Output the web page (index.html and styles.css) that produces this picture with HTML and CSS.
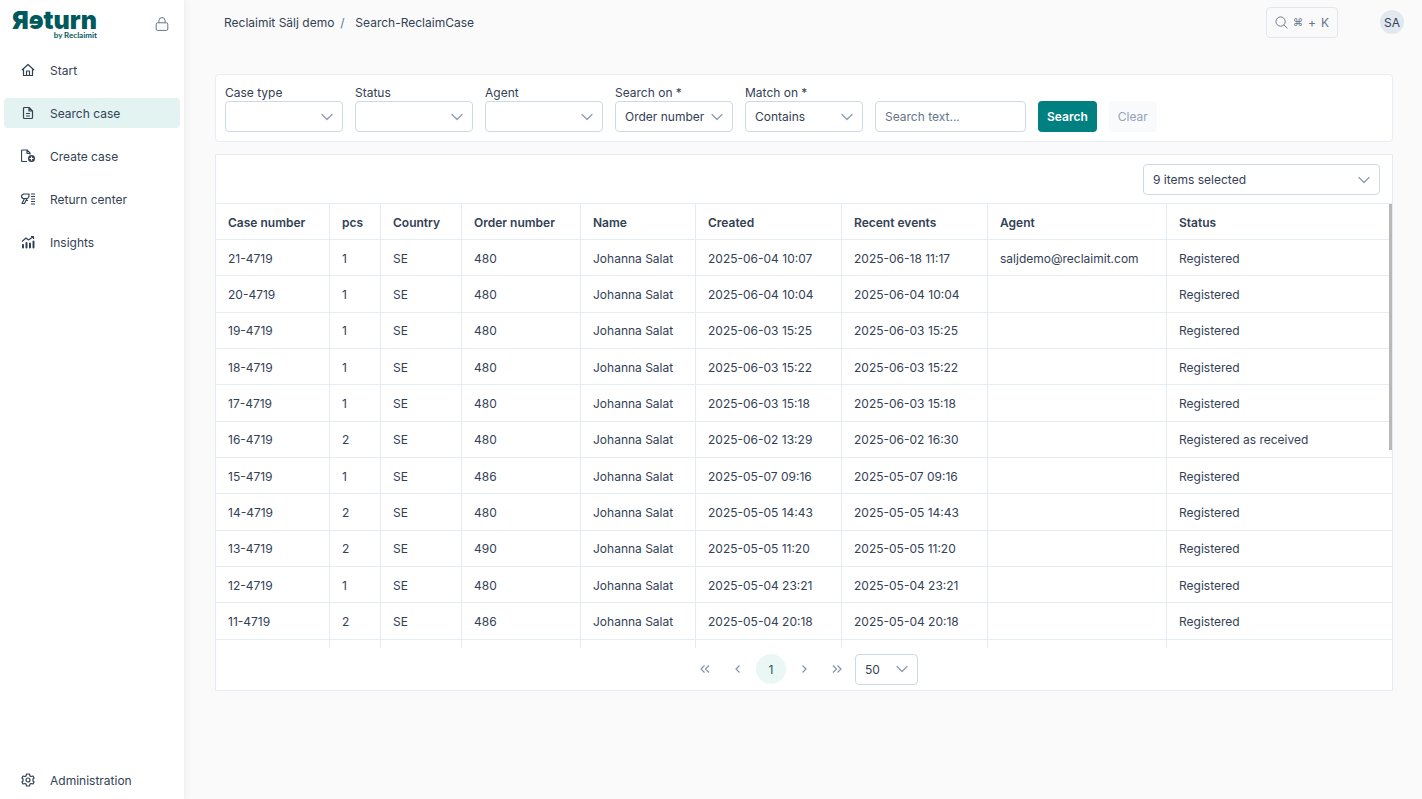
FILE: index.html
```html
<!DOCTYPE html>
<html lang="en">
<head>
  <meta charset="UTF-8">
  <meta name="viewport" content="width=device-width, initial-scale=1.0">
  <title>Search case - Return by Reclaimit</title>
  <link rel="stylesheet" href="styles.css">
</head>
<body>
  <aside class="sidebar">
    <div class="sidebar-top">
      <a href="#" class="logo">
        <span class="logo-name">Яɘturn</span>
        <span class="logo-sub">by Reclaimit</span>
      </a>
      <button type="button" class="lock-button" aria-label="Lock menu">
        <svg class="lock-icon" viewBox="0 0 14 14"><rect x="1.2" y="5.8" width="11.6" height="7.6" rx="1.4"/><path d="M3.9 5.8V3.7a3.1 3.1 0 0 1 6.2 0v2.1"/></svg>
      </button>
    </div>
    <nav class="menu">
      <a href="#" class="menu-item">
        <svg class="icon" viewBox="0 0 28 28"><path d="M2 14 14 3l12 11M5 11v14h18V11M11 25v-9h6v9"/></svg>
        Start
      </a>
      <a href="#" class="menu-item active">
        <svg class="icon" viewBox="0 0 28 28"><path d="M7 3h9l7 7v13a2 2 0 0 1-2 2H7a2 2 0 0 1-2-2V5a2 2 0 0 1 2-2zM16 3v7h6M10 15h8M10 20h8"/></svg>
        Search case
      </a>
      <a href="#" class="menu-item">
        <svg class="icon" viewBox="0 0 28 28"><path d="M12 25H3a2 2 0 0 1-2-2V4a2 2 0 0 1 2-2h9l6 6v3M12 3v6h6"/><circle class="solid" cx="21" cy="19" r="7"/><path class="light" d="M21 15v8M17 19h8"/></svg>
        Create case
      </a>
      <a href="#" class="menu-item">
        <svg class="icon" viewBox="0 0 28 28"><path d="M5 4h11v5l-3 4H4l-3-3V7zM12 13 7 23H2l5-10M11 17h3"/><path d="M20 4h8M20 9h8M20 14h8M20 19h8M20 24h8"/></svg>
        Return center
      </a>
      <a href="#" class="menu-item">
        <svg class="icon" viewBox="0 0 28 28"><path d="m2 13 8-7 5 4 10-7M20 3h5v5"/><path class="bars" d="M4 25v-5M11 25v-9M18 25v-8M25 25V13"/></svg>
        Insights
      </a>
    </nav>
    <a href="#" class="menu-item menu-bottom">
      <svg class="icon" viewBox="0 0 28 28"><path d="M11 2h6l1 4 2 1 4-1 2 4-2 2v4l2 2-2 4-4-1-2 1-1 4h-6l-1-4-2-1-4 1-2-4 2-2v-4l-2-2 2-4 4 1 2-1z"/><circle cx="14" cy="14" r="4"/></svg>
      Administration
    </a>
  </aside>

  <div class="page">
    <header class="topbar">
      <nav class="breadcrumb">
        <a href="#">Reclaimit Sälj demo</a>
        <span class="separator">/</span>
        <a href="#">Search-ReclaimCase</a>
      </nav>
      <button type="button" class="quick-search" aria-label="Quick search">
        <svg class="search-icon" viewBox="0 0 14 14"><circle cx="6" cy="6" r="5"/><path d="m9.6 9.6 3.8 3.8"/></svg>
        <span class="key-symbol">⌘</span>
        <span>+</span>
        <span>K</span>
      </button>
      <button type="button" class="avatar">SA</button>
    </header>

    <main class="content">
      <form class="card filters">
        <div class="field">
          <label for="caseType">Case type</label>
          <select id="caseType"><option></option></select>
        </div>
        <div class="field">
          <label for="status">Status</label>
          <select id="status"><option></option></select>
        </div>
        <div class="field">
          <label for="agent">Agent</label>
          <select id="agent"><option></option></select>
        </div>
        <div class="field">
          <label for="searchOn">Search on *</label>
          <select id="searchOn"><option>Order number</option></select>
        </div>
        <div class="field">
          <label for="matchOn">Match on *</label>
          <select id="matchOn"><option>Contains</option></select>
        </div>
        <input type="text" class="search-text" placeholder="Search text..." aria-label="Search text">
        <button type="button" class="btn btn-primary">Search</button>
        <button type="button" class="btn btn-clear">Clear</button>
      </form>

      <section class="results">
        <div class="results-top">
          <select class="column-select" aria-label="Columns"><option>9 items selected</option></select>
        </div>
        <div class="table-wrap">
          <table>
            <colgroup>
              <col class="col-case"><col class="col-pcs"><col class="col-country"><col class="col-order"><col class="col-name"><col class="col-date"><col class="col-date"><col class="col-agent"><col>
            </colgroup>
            <thead>
              <tr><th>Case number</th><th>pcs</th><th>Country</th><th>Order number</th><th>Name</th><th>Created</th><th>Recent events</th><th>Agent</th><th>Status</th></tr>
            </thead>
            <tbody>
              <tr><td>21-4719</td><td>1</td><td>SE</td><td>480</td><td>Johanna Salat</td><td>2025-06-04 10:07</td><td>2025-06-18 11:17</td><td>saljdemo@reclaimit.com</td><td>Registered</td></tr>
              <tr><td>20-4719</td><td>1</td><td>SE</td><td>480</td><td>Johanna Salat</td><td>2025-06-04 10:04</td><td>2025-06-04 10:04</td><td></td><td>Registered</td></tr>
              <tr><td>19-4719</td><td>1</td><td>SE</td><td>480</td><td>Johanna Salat</td><td>2025-06-03 15:25</td><td>2025-06-03 15:25</td><td></td><td>Registered</td></tr>
              <tr><td>18-4719</td><td>1</td><td>SE</td><td>480</td><td>Johanna Salat</td><td>2025-06-03 15:22</td><td>2025-06-03 15:22</td><td></td><td>Registered</td></tr>
              <tr><td>17-4719</td><td>1</td><td>SE</td><td>480</td><td>Johanna Salat</td><td>2025-06-03 15:18</td><td>2025-06-03 15:18</td><td></td><td>Registered</td></tr>
              <tr><td>16-4719</td><td>2</td><td>SE</td><td>480</td><td>Johanna Salat</td><td>2025-06-02 13:29</td><td>2025-06-02 16:30</td><td></td><td>Registered as received</td></tr>
              <tr><td>15-4719</td><td>1</td><td>SE</td><td>486</td><td>Johanna Salat</td><td>2025-05-07 09:16</td><td>2025-05-07 09:16</td><td></td><td>Registered</td></tr>
              <tr><td>14-4719</td><td>2</td><td>SE</td><td>480</td><td>Johanna Salat</td><td>2025-05-05 14:43</td><td>2025-05-05 14:43</td><td></td><td>Registered</td></tr>
              <tr><td>13-4719</td><td>2</td><td>SE</td><td>490</td><td>Johanna Salat</td><td>2025-05-05 11:20</td><td>2025-05-05 11:20</td><td></td><td>Registered</td></tr>
              <tr><td>12-4719</td><td>1</td><td>SE</td><td>480</td><td>Johanna Salat</td><td>2025-05-04 23:21</td><td>2025-05-04 23:21</td><td></td><td>Registered</td></tr>
              <tr><td>11-4719</td><td>2</td><td>SE</td><td>486</td><td>Johanna Salat</td><td>2025-05-04 20:18</td><td>2025-05-04 20:18</td><td></td><td>Registered</td></tr>
              <tr><td></td><td></td><td></td><td></td><td></td><td></td><td></td><td></td><td></td></tr>
            </tbody>
          </table>
          <div class="scroll-thumb"></div>
        </div>
        <div class="paginator">
          <button type="button" class="page-button" aria-label="First page"><svg viewBox="0 0 24 24"><path d="m11 5-7 7 7 7M20 5l-7 7 7 7"/></svg></button>
          <button type="button" class="page-button" aria-label="Previous page"><svg viewBox="0 0 24 24"><path d="m15 5-7 7 7 7"/></svg></button>
          <button type="button" class="page-button current">1</button>
          <button type="button" class="page-button" aria-label="Next page"><svg viewBox="0 0 24 24"><path d="m9 5 7 7-7 7"/></svg></button>
          <button type="button" class="page-button" aria-label="Last page"><svg viewBox="0 0 24 24"><path d="m4 5 7 7-7 7M13 5l7 7-7 7"/></svg></button>
          <select class="page-size" aria-label="Rows per page"><option>50</option></select>
        </div>
      </section>
    </main>
  </div>
</body>
</html>
```

FILE: styles.css
```css
* {
  box-sizing: border-box;
}

body {
  margin: 0;
  min-height: 100vh;
  display: flex;
  background-color: #fafafa;
  color: #334155;
  font-family: Inter, sans-serif;
  font-size: 12px;
  line-height: 17px;
}

a {
  color: inherit;
  text-decoration: none;
}

button,
input,
select {
  font: inherit;
  color: inherit;
}

button {
  cursor: pointer;
}

svg {
  fill: none;
  stroke: currentColor;
}

/* Sidebar */
.sidebar {
  display: flex;
  flex-direction: column;
  flex: none;
  width: 185px;
  padding: 0 4px 4px;
  background-color: #fff;
  border-right: 1px solid #f1f1f1;
  box-shadow: 0 0 8px rgba(0, 0, 0, 0.06);
}

.sidebar-top {
  display: flex;
  justify-content: space-between;
  align-items: center;
  height: 48px;
  padding: 0 11px 0 8px;
}

.logo {
  display: flex;
  flex-direction: column;
  color: #00595c;
}

.logo-name {
  font-size: 25px;
  font-weight: 900;
  line-height: 22px;
}

.logo-sub {
  font-family: Lato, sans-serif;
  font-size: 8px;
  font-weight: 700;
  line-height: 8px;
  text-align: right;
}

.lock-button {
  display: flex;
  padding: 0;
  border: none;
  background: none;
  color: #64748b;
}

.lock-icon {
  width: 14px;
  height: 14px;
}

.menu {
  display: flex;
  flex-direction: column;
  gap: 13px;
  padding-top: 7px;
}

.menu-item {
  display: flex;
  align-items: center;
  gap: 15px;
  height: 30px;
  padding: 0 17px;
  border-radius: 4px;
}

.menu-item.active {
  background-color: #e2f3f1;
}

.menu-bottom {
  margin-top: auto;
}

.icon {
  width: 14px;
  height: 14px;
  stroke-width: 2.4;
  stroke-linejoin: round;
}

.icon .solid {
  fill: currentColor;
  stroke: none;
}

.icon .light {
  stroke: #fff;
}

.icon .bars {
  stroke-width: 4;
  stroke-linecap: round;
}

/* Top bar */
.page {
  flex: 1;
  min-width: 0;
}

.topbar {
  display: flex;
  align-items: center;
  height: 44px;
  padding: 0 18px 0 39px;
}

.breadcrumb {
  display: flex;
  gap: 6px;
  margin-right: auto;
}

.separator {
  width: 9px;
  color: #64748b;
}

.quick-search {
  display: flex;
  align-items: center;
  gap: 5px;
  height: 31px;
  padding: 0 8px;
  border: 1px solid #e2e8f0;
  border-radius: 4px;
  background-color: #fafafa;
  color: #64748b;
}

.search-icon {
  width: 13px;
  height: 13px;
}

.key-symbol {
  font-size: 10px;
}

.avatar {
  width: 24px;
  height: 24px;
  margin-left: 42px;
  padding: 0;
  border: none;
  border-radius: 50%;
  background-color: #e2e8f0;
}

/* Filters */
.content {
  padding: 30px 29px 0 30px;
}

.card {
  border: 1px solid #e9eef5;
  border-radius: 4px;
  background-color: #fff;
}

.filters {
  display: flex;
  align-items: flex-end;
  gap: 12px;
  padding: 9px;
  margin-bottom: 12px;
}

.field {
  display: flex;
  flex-direction: column;
}

.field select {
  width: 118px;
}

select,
.search-text {
  height: 31px;
  padding: 0 9px;
  border: 1px solid #cfd9e5;
  border-radius: 4px;
  background-color: #fff;
  outline: none;
}

select {
  appearance: none;
  background-image: url("data:image/svg+xml,%3Csvg xmlns='http://www.w3.org/2000/svg' width='12' height='12' viewBox='0 0 24 24' fill='none' stroke='%238a9ab0' stroke-width='2.4' stroke-linecap='round' stroke-linejoin='round'%3E%3Cpath d='m2 7 10 10L22 7'/%3E%3C/svg%3E");
  background-repeat: no-repeat;
  background-position: right 9px center;
}

.search-text {
  width: 151px;
}

.search-text::placeholder {
  color: #64748b;
}

.btn {
  height: 31px;
  padding: 0 9px;
  border: none;
  border-radius: 4px;
}

.btn-primary {
  background-color: #008080;
  color: #fff;
  font-weight: 600;
}

.btn-clear {
  background-color: #f8fafc;
  color: #94a3b8;
}

/* Results */
.results {
  border: 1px solid #e6ecf3;
  background-color: #fff;
}

.results-top {
  display: flex;
  justify-content: flex-end;
  padding: 9px 12px 8px;
  border-bottom: 1px solid #e6ecf3;
}

.column-select {
  width: 237px;
}

.table-wrap {
  position: relative;
  height: 444px;
  overflow: hidden;
}

table {
  width: 100%;
  height: 472px;
  table-layout: fixed;
  border-collapse: separate;
  border-spacing: 0;
}

th,
td {
  height: 36px;
  padding: 1px 12px 0;
  border-right: 1px solid #e6ecf3;
  border-bottom: 1px solid #e6ecf3;
  text-align: left;
  white-space: nowrap;
}

th {
  font-weight: 600;
}

th:last-child,
td:last-child {
  border-right: none;
}

.col-case {
  width: 114px;
}

.col-pcs {
  width: 51px;
}

.col-country {
  width: 81px;
}

.col-order {
  width: 119px;
}

.col-name {
  width: 115px;
}

.col-date {
  width: 146px;
}

.col-agent {
  width: 179px;
}

.scroll-thumb {
  position: absolute;
  top: 0;
  right: 0;
  width: 3px;
  height: 246px;
  background-color: #b8b8b8;
}

.paginator {
  display: flex;
  justify-content: center;
  align-items: center;
  gap: 3px;
  height: 42px;
}

.page-button {
  display: flex;
  justify-content: center;
  align-items: center;
  width: 30px;
  height: 30px;
  padding: 0;
  border: none;
  border-radius: 50%;
  background: none;
  color: #8494aa;
}

.page-button svg {
  width: 12px;
  height: 12px;
  stroke-width: 2.4;
}

.page-button.current {
  background-color: #ebf7f5;
  color: #0f5f5f;
}

.page-size {
  width: 63px;
}
```
